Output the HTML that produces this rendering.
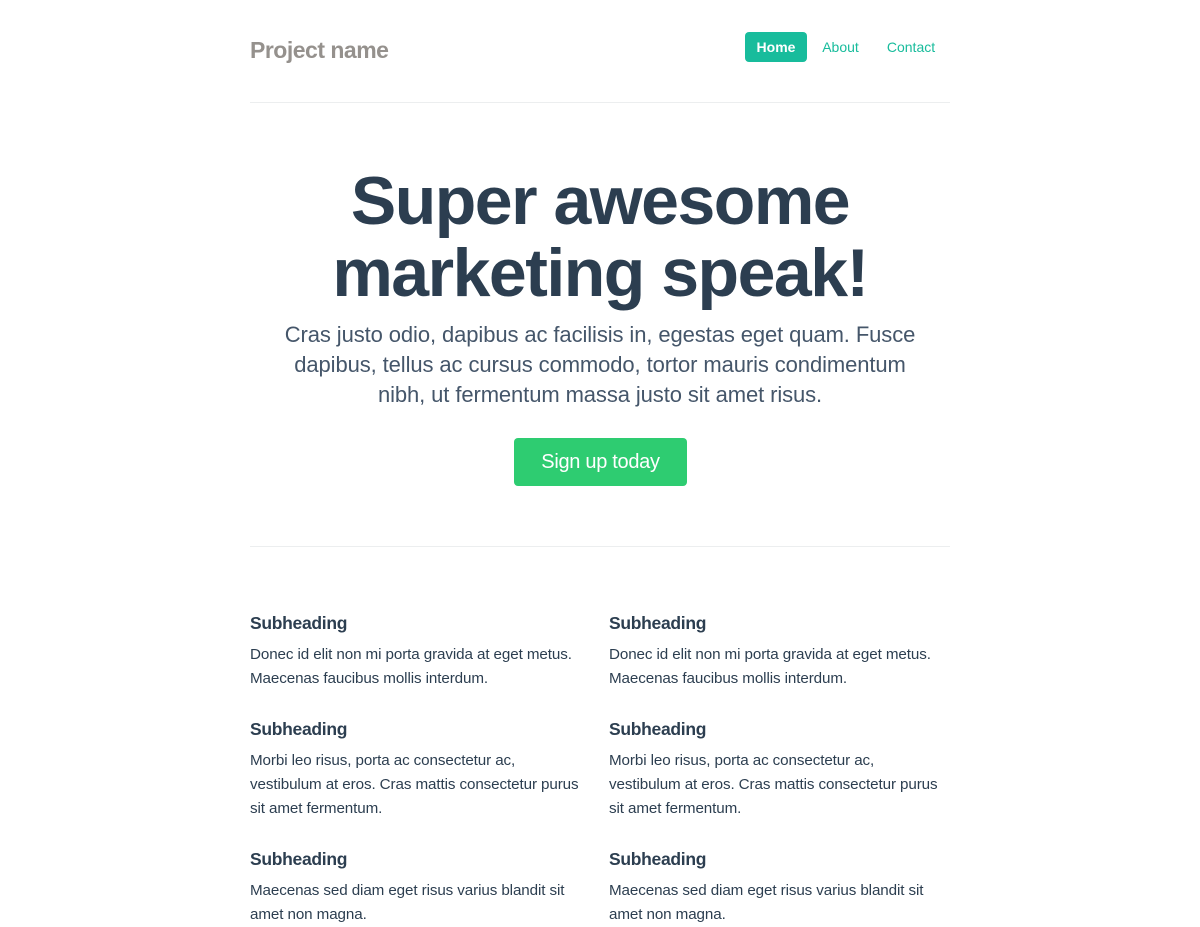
<!DOCTYPE html>
<html><head><meta charset="utf-8"><style>
body{margin:0;background:#fff;font-family:"Liberation Sans",sans-serif;color:#2c3e50;width:1200px;height:900px;overflow:hidden;position:relative}
.a{position:absolute}
.brand{left:250px;top:37px;font-size:23px;font-weight:bold;color:#95918d;letter-spacing:-0.5px}
.nav a{position:absolute;top:32px;height:30px;line-height:30px;font-size:14px;color:#18bc9c;text-decoration:none;text-align:center}
.hr{left:250px;width:700px;height:1px;background:#eceeef}
h1{position:absolute;left:250px;width:700px;top:165px;margin:0;text-align:center;font-size:68px;line-height:72px;font-weight:bold;letter-spacing:-1.5px}
.lead{left:200px;width:800px;top:320px;text-align:center;font-size:22px;line-height:30px;color:#45566a;letter-spacing:-0.1px;white-space:nowrap}
.btn{left:514px;top:438px;width:173px;height:48px;background:#2ecc71;border-radius:4px;color:#fff;font-size:20px;line-height:48px;text-align:center;letter-spacing:-0.3px}
.col{width:345px;white-space:nowrap}
.col h4{margin:0;font-size:17.5px;font-weight:bold;line-height:24px;letter-spacing:-0.3px}
.col p{margin:8px 0 0;font-size:15.2px;line-height:24px;letter-spacing:-0.1px}
</style></head><body>
<div class="a brand">Project name</div>
<div class="nav">
<a style="left:745px;width:62px;background:#18bc9c;color:#fff;border-radius:4px;font-weight:bold">Home</a>
<a style="left:814px;width:53px">About</a>
<a style="left:878px;width:66px">Contact</a>
</div>
<div class="a hr" style="top:102px"></div>
<h1>Super awesome<br>marketing speak!</h1>
<div class="a lead">Cras justo odio, dapibus ac facilisis in, egestas eget quam. Fusce<br>dapibus, tellus ac cursus commodo, tortor mauris condimentum<br>nibh, ut fermentum massa justo sit amet risus.</div>
<div class="a btn">Sign up today</div>
<div class="a hr" style="top:546px"></div>

<div class="a col" style="left:250px;top:611px">
<h4>Subheading</h4><p>Donec id elit non mi porta gravida at eget metus.<br>Maecenas faucibus mollis interdum.</p></div>
<div class="a col" style="left:250px;top:717px">
<h4>Subheading</h4><p>Morbi leo risus, porta ac consectetur ac,<br>vestibulum at eros. Cras mattis consectetur purus<br>sit amet fermentum.</p></div>
<div class="a col" style="left:250px;top:847px">
<h4>Subheading</h4><p>Maecenas sed diam eget risus varius blandit sit<br>amet non magna.</p></div>

<div class="a col" style="left:609px;top:611px">
<h4>Subheading</h4><p>Donec id elit non mi porta gravida at eget metus.<br>Maecenas faucibus mollis interdum.</p></div>
<div class="a col" style="left:609px;top:717px">
<h4>Subheading</h4><p>Morbi leo risus, porta ac consectetur ac,<br>vestibulum at eros. Cras mattis consectetur purus<br>sit amet fermentum.</p></div>
<div class="a col" style="left:609px;top:847px">
<h4>Subheading</h4><p>Maecenas sed diam eget risus varius blandit sit<br>amet non magna.</p></div>
</body></html>
